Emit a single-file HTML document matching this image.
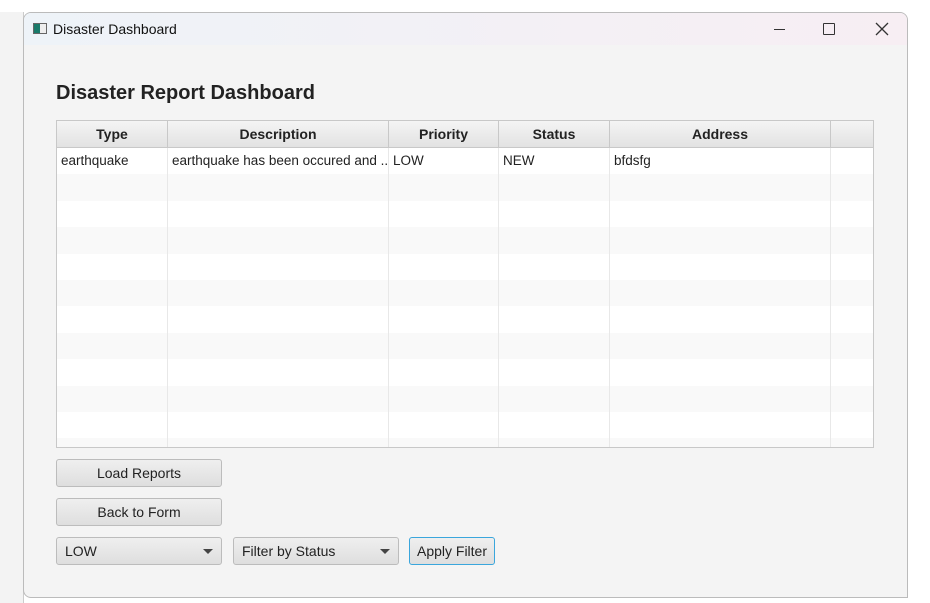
<!DOCTYPE html>
<html><head><style>
*{margin:0;padding:0;box-sizing:border-box}
body{width:930px;height:603px;background:#fff;position:relative;overflow:hidden;font-family:"Liberation Sans",sans-serif}
.strip{position:absolute;left:0;top:12px;width:24px;height:591px;background:#f3f3f3;border-right:1px solid #ccc}
.win{position:absolute;left:23px;top:12px;width:885px;height:586px;background:#f4f4f4;border:1px solid #bbb;border-radius:8px 8px 0 8px;overflow:hidden}
.title{height:32px;background:linear-gradient(90deg,#eef3f8,#f7eef3);position:relative;font-size:14px;color:#111}
.abs{position:absolute}
h1{position:absolute;left:32px;top:69px;font-size:20px;font-weight:bold;color:#222}
.tbl{position:absolute;left:32px;top:107px;width:818px;height:328px;border:1px solid #c8c8c8;background:#fff;overflow:hidden}
.hdr{height:27px;background:linear-gradient(#f4f4f4,#e2e2e2);border-bottom:1px solid #c8c8c8;display:flex}
.hdr div{border-right:1px solid #c8c8c8;font-size:14px;font-weight:bold;text-align:center;line-height:27px;color:#222}
.row{height:26.4px;display:flex}
.row:nth-child(odd){background:#f9f9f9}
.row div{border-right:1px solid #e8e8e8;font-size:13.5px;line-height:26px;padding-left:4px;color:#222;white-space:nowrap;overflow:hidden}
.btn{position:absolute;height:28px;border:1px solid #bcbcbc;border-radius:3px;background:linear-gradient(#efefef,#dedede);font-size:14px;color:#222;line-height:26px;text-align:center}
.cb{text-align:left;padding-left:8px}
.cb:after{content:"";position:absolute;right:8px;top:11px;border-left:5px solid transparent;border-right:5px solid transparent;border-top:5px solid #444}
</style></head><body>
<div class="strip"></div>
<div class="win">
 <div class="title">
  <div class="abs" style="left:9px;top:10px;width:14px;height:11px;border:1px solid #666;background:linear-gradient(90deg,#1a7a6a 50%,#eee 50%)"></div>
  <div class="abs" style="left:29px;top:8px">Disaster Dashboard</div>
  <div class="abs" style="left:750px;top:16px;width:11px;height:1px;background:#333"></div>
  <div class="abs" style="left:799px;top:10px;width:12px;height:12px;border:1.5px solid #333;border-radius:1px"></div>
  <svg class="abs" style="left:851px;top:9px" width="14" height="14"><path d="M1 1L13 13M13 1L1 13" stroke="#333" stroke-width="1.3"/></svg>
 </div>
 <h1>Disaster Report Dashboard</h1>
 <div class="tbl">
  <div class="hdr"><div style="width:111px">Type</div><div style="width:221px">Description</div><div style="width:110px">Priority</div><div style="width:111px">Status</div><div style="width:221px">Address</div><div style="flex:1;border:0"></div></div>
  <div>
  <div class="row" style="background:#fff"><div style="width:111px">earthquake</div><div style="width:221px">earthquake has been occured and ...</div><div style="width:110px">LOW</div><div style="width:111px">NEW</div><div style="width:221px">bfdsfg</div><div style="flex:1;border:0"></div></div>
  <div class="row" style="background:#f9f9f9"><div style="width:111px"></div><div style="width:221px"></div><div style="width:110px"></div><div style="width:111px"></div><div style="width:221px"></div></div>
  <div class="row" style="background:#fff"><div style="width:111px"></div><div style="width:221px"></div><div style="width:110px"></div><div style="width:111px"></div><div style="width:221px"></div></div>
  <div class="row" style="background:#f9f9f9"><div style="width:111px"></div><div style="width:221px"></div><div style="width:110px"></div><div style="width:111px"></div><div style="width:221px"></div></div>
  <div class="row" style="background:#fff"><div style="width:111px"></div><div style="width:221px"></div><div style="width:110px"></div><div style="width:111px"></div><div style="width:221px"></div></div>
  <div class="row" style="background:#f9f9f9"><div style="width:111px"></div><div style="width:221px"></div><div style="width:110px"></div><div style="width:111px"></div><div style="width:221px"></div></div>
  <div class="row" style="background:#fff"><div style="width:111px"></div><div style="width:221px"></div><div style="width:110px"></div><div style="width:111px"></div><div style="width:221px"></div></div>
  <div class="row" style="background:#f9f9f9"><div style="width:111px"></div><div style="width:221px"></div><div style="width:110px"></div><div style="width:111px"></div><div style="width:221px"></div></div>
  <div class="row" style="background:#fff"><div style="width:111px"></div><div style="width:221px"></div><div style="width:110px"></div><div style="width:111px"></div><div style="width:221px"></div></div>
  <div class="row" style="background:#f9f9f9"><div style="width:111px"></div><div style="width:221px"></div><div style="width:110px"></div><div style="width:111px"></div><div style="width:221px"></div></div>
  <div class="row" style="background:#fff"><div style="width:111px"></div><div style="width:221px"></div><div style="width:110px"></div><div style="width:111px"></div><div style="width:221px"></div></div>
  <div class="row" style="background:#f9f9f9"><div style="width:111px"></div><div style="width:221px"></div><div style="width:110px"></div><div style="width:111px"></div><div style="width:221px"></div></div>
  </div>
 </div>
 <div class="btn" style="left:32px;top:446px;width:166px">Load Reports</div>
 <div class="btn" style="left:32px;top:485px;width:166px">Back to Form</div>
 <div class="btn cb" style="left:32px;top:524px;width:166px">LOW</div>
 <div class="btn cb" style="left:209px;top:524px;width:166px">Filter by Status</div>
 <div class="btn" style="left:385px;top:524px;width:86px;border:1.5px solid #3aa6dc">Apply Filter</div>
</div>
</body></html>
